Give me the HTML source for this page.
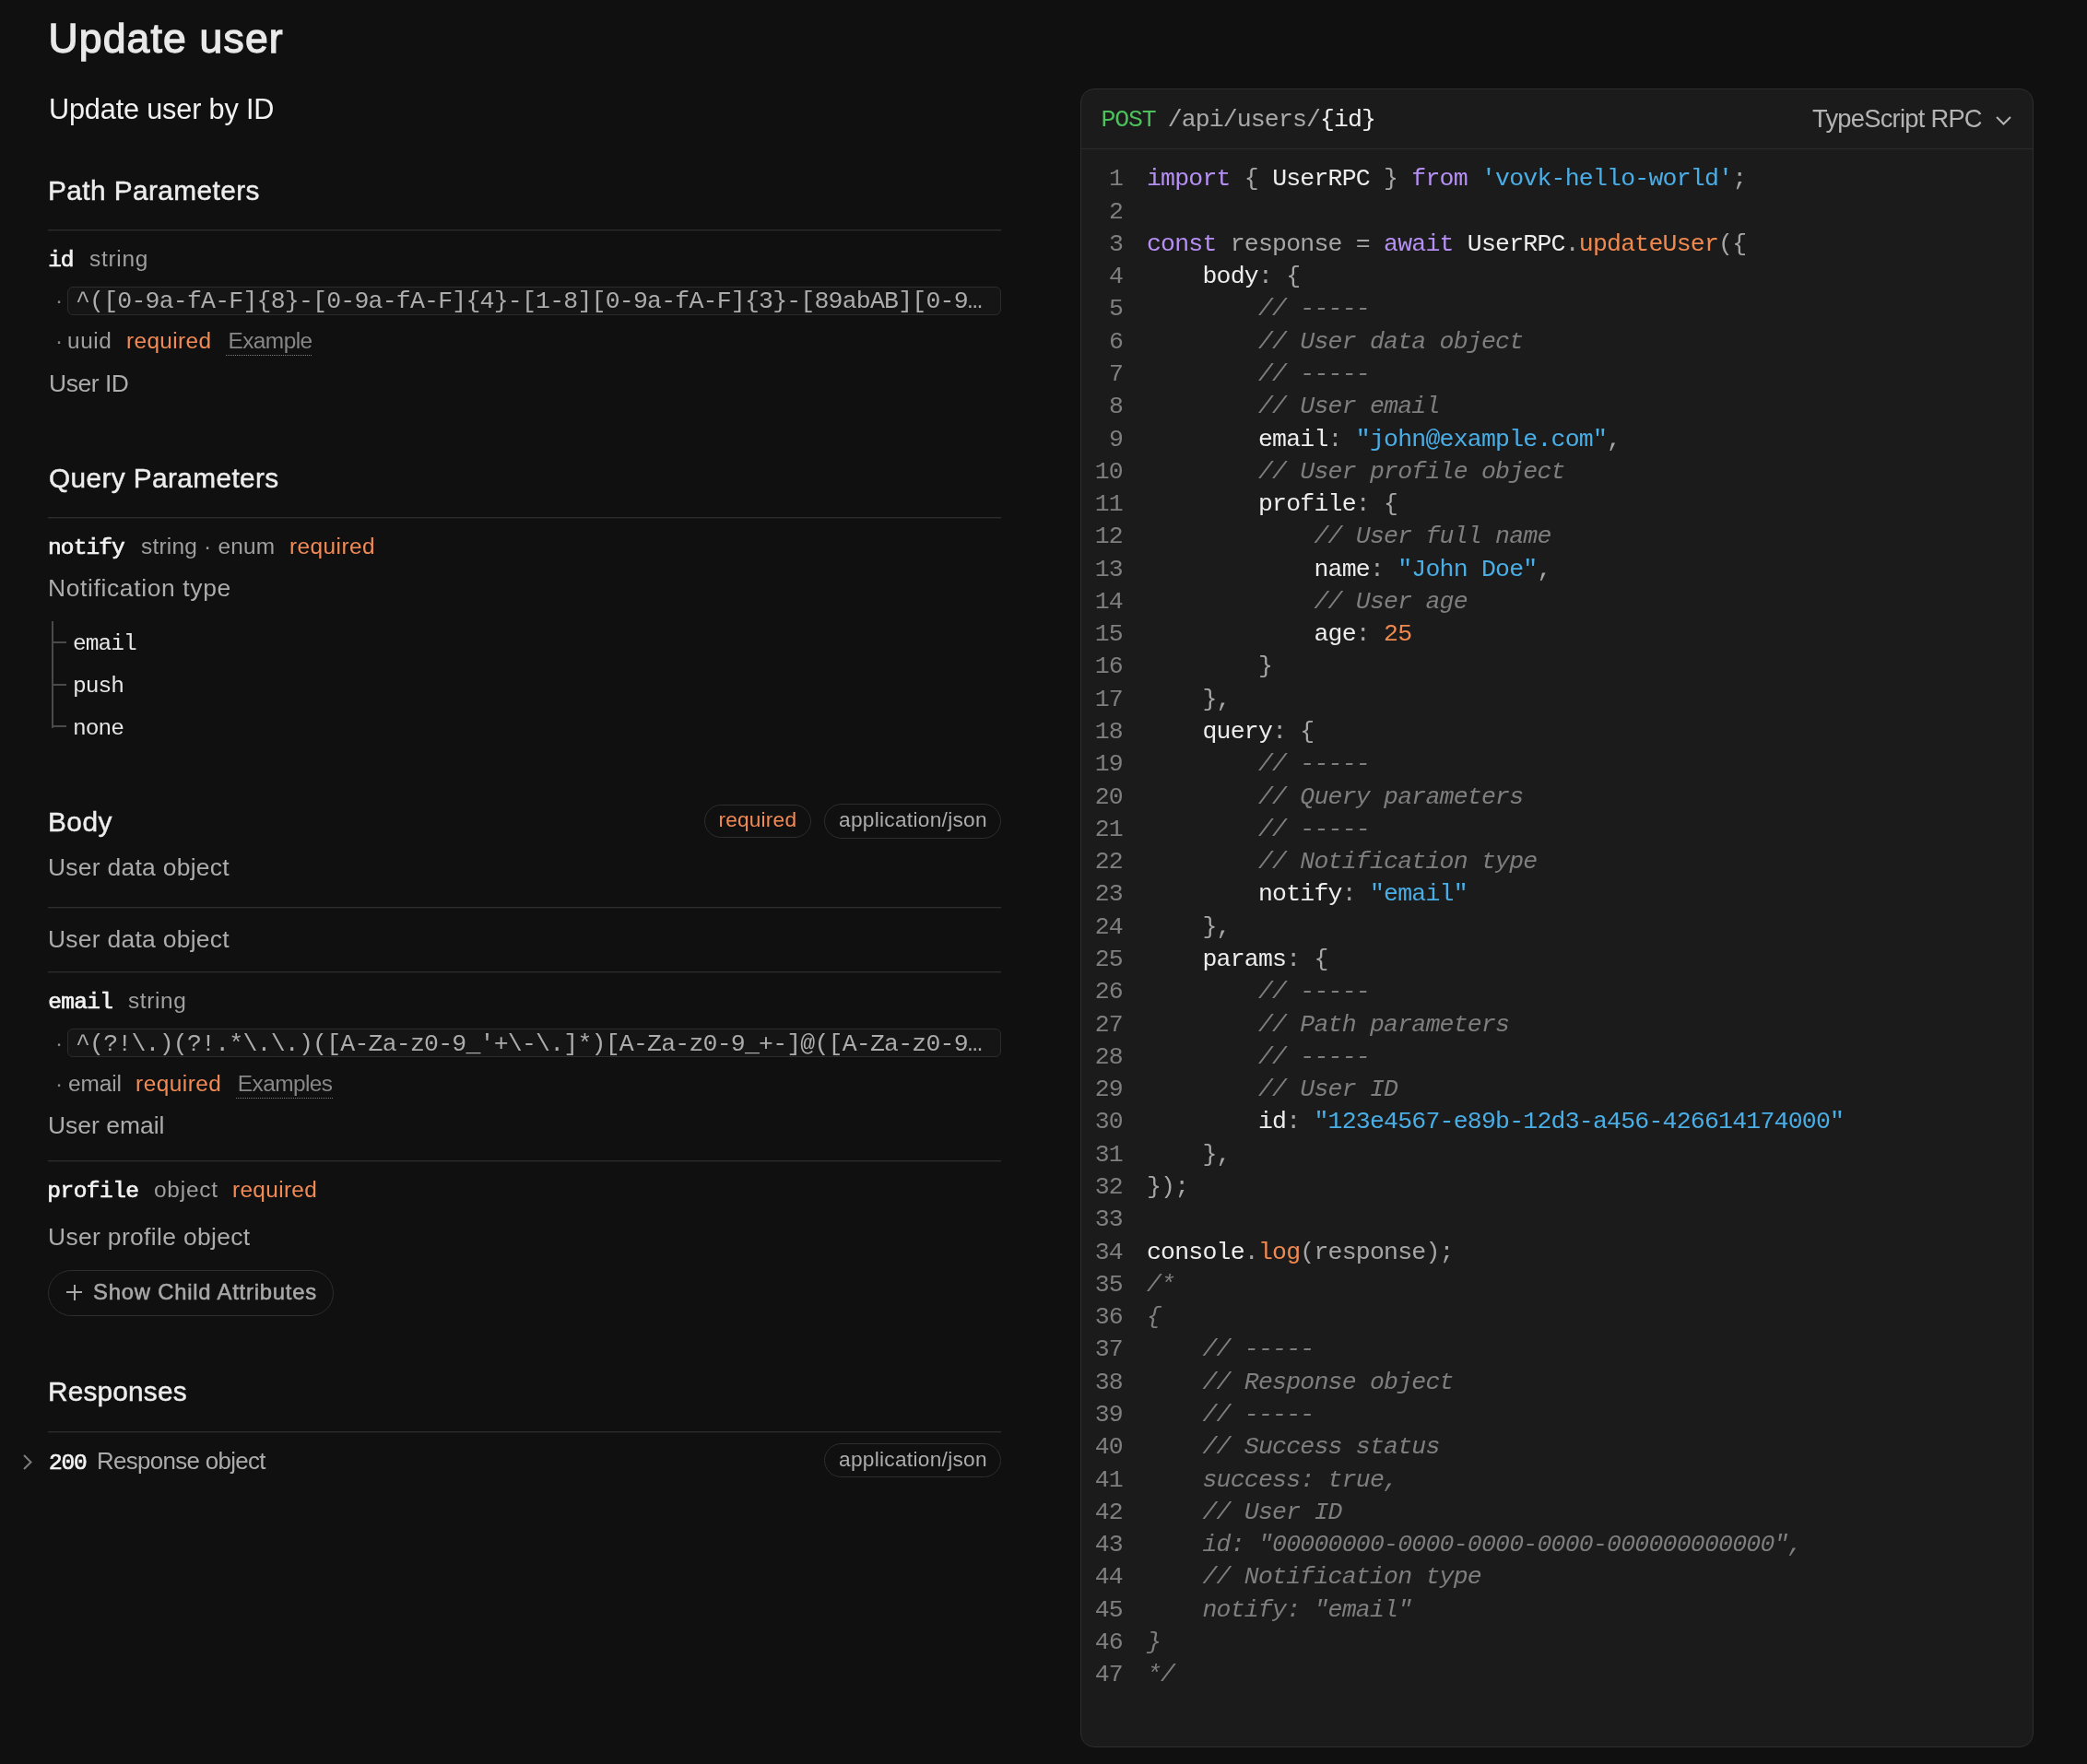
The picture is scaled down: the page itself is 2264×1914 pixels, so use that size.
<!DOCTYPE html>
<html><head><meta charset="utf-8"><title>Update user</title>
<style>
html,body{margin:0;padding:0;}
body{width:2264px;height:1914px;overflow:hidden;position:relative;background:#101010;font-family:'Liberation Sans', sans-serif;}
.bgfade{position:absolute;left:0;top:0;width:2264px;height:1914px;background:linear-gradient(90deg,rgba(0,0,0,0) 0px,rgba(0,0,0,0) 1750px,rgba(0,0,0,0.22) 2264px);}
.t{position:absolute;white-space:pre;font-family:'Liberation Sans', sans-serif;}
.b{position:absolute;}
.wrap{position:absolute;left:0;top:0;width:2264px;height:1914px;will-change:transform;}
.code{position:absolute;margin:0;font-family:'Liberation Mono', monospace;font-size:26.5px;line-height:35.28px;color:#ededed;white-space:pre;letter-spacing:-0.78px;}
</style></head><body>
<div class="wrap">
<div class="t" id="title" style="left:52.40px;top:20.46px;font-size:44.48px;line-height:44.48px;color:#e9e9e9;letter-spacing:1.200px;-webkit-text-stroke:1.3px #e9e9e9;">Update user</div>
<div class="t" id="subtitle" style="left:53.00px;top:102.57px;font-size:30.67px;line-height:30.67px;color:#f2f2f2;letter-spacing:-0.163px;">Update user by ID</div>
<div class="t" id="h_path" style="left:52.00px;top:192.00px;font-size:29.80px;line-height:29.80px;color:#ededed;letter-spacing:0.421px;-webkit-text-stroke:0.45px #ededed;">Path Parameters</div>
<div class="b" style="left:52.00px;top:249.00px;width:1034.00px;height:2.00px;background:linear-gradient(#2c2c2c 50%,#1a1a1a 50%);"></div>
<div class="t" id="id_name" style="left:52.20px;top:271.45px;font-size:24.50px;line-height:24.50px;color:#f2f2f2;font-family:'Liberation Mono', monospace;letter-spacing:-1.200px;-webkit-text-stroke:0.7px #f2f2f2;">id</div>
<div class="t" id="id_type" style="left:97.00px;top:269.49px;font-size:24.42px;line-height:24.42px;color:#9f9f9f;letter-spacing:0.740px;">string</div>
<div class="b" style="left:73.00px;top:311.00px;width:1013.00px;height:31.00px;border:1px solid #2c2c2c;border-radius:6px;background:#151515;box-sizing:border-box;"></div>
<div class="t" id="dot1" style="left:60.00px;top:313.59px;font-size:24.42px;line-height:24.42px;color:#878787;">·</div>
<div class="t" id="regex1" style="left:82.00px;top:314.05px;font-size:26.50px;line-height:26.50px;color:#acacac;font-family:'Liberation Mono', monospace;letter-spacing:-0.780px;">^([0-9a-fA-F]{8}-[0-9a-fA-F]{4}-[1-8][0-9a-fA-F]{3}-[89abAB][0-9…</div>
<div class="t" id="dot2" style="left:60.00px;top:358.39px;font-size:24.42px;line-height:24.42px;color:#878787;">·</div>
<div class="t" id="id_fmt" style="left:73.00px;top:358.39px;font-size:24.42px;line-height:24.42px;color:#9f9f9f;letter-spacing:0.567px;">uuid</div>
<div class="t" id="id_req" style="left:137.00px;top:358.39px;font-size:24.42px;line-height:24.42px;color:#f28a55;letter-spacing:0.357px;">required</div>
<div class="t" id="id_ex" style="left:247.40px;top:358.39px;font-size:24.42px;line-height:24.42px;color:#878787;letter-spacing:-0.530px;">Example</div>
<div class="b" style="left:245.00px;top:385.00px;width:94.00px;height:1.00px;background-image:linear-gradient(90deg,#7a7a7a 50%,transparent 50%);background-size:2px 1px;"></div>
<div class="t" id="id_desc" style="left:53.00px;top:402.57px;font-size:26.45px;line-height:26.45px;color:#acacac;letter-spacing:-0.450px;">User ID</div>
<div class="t" id="h_query" style="left:53.00px;top:503.70px;font-size:29.80px;line-height:29.80px;color:#ededed;letter-spacing:0.387px;-webkit-text-stroke:0.45px #ededed;">Query Parameters</div>
<div class="b" style="left:52.00px;top:561.00px;width:1034.00px;height:2.00px;background:linear-gradient(#2c2c2c 50%,#1a1a1a 50%);"></div>
<div class="t" id="notify_name" style="left:52.00px;top:582.85px;font-size:24.50px;line-height:24.50px;color:#f2f2f2;font-family:'Liberation Mono', monospace;letter-spacing:-0.880px;-webkit-text-stroke:0.7px #f2f2f2;">notify</div>
<div class="t" id="notify_type" style="left:153.00px;top:580.89px;font-size:24.42px;line-height:24.42px;color:#9f9f9f;letter-spacing:0.225px;">string · enum</div>
<div class="t" id="notify_req" style="left:314.00px;top:580.89px;font-size:24.42px;line-height:24.42px;color:#f28a55;letter-spacing:0.429px;">required</div>
<div class="t" id="notify_desc" style="left:52.00px;top:624.97px;font-size:26.45px;line-height:26.45px;color:#acacac;letter-spacing:0.631px;">Notification type</div>
<div class="b" style="left:56.00px;top:673.50px;width:2.00px;height:116.90px;background:#4a4a4a;"></div>
<div class="b" style="left:56.00px;top:695.80px;width:16.00px;height:2.00px;background:#4a4a4a;"></div>
<div class="b" style="left:56.00px;top:742.00px;width:16.00px;height:2.00px;background:#4a4a4a;"></div>
<div class="b" style="left:56.00px;top:787.40px;width:16.00px;height:2.00px;background:#4a4a4a;"></div>
<div class="t" id="enum_email" style="left:79.00px;top:686.75px;font-size:24.50px;line-height:24.50px;color:#e6e6e6;font-family:'Liberation Mono', monospace;letter-spacing:-0.925px;">email</div>
<div class="t" id="enum_push" style="left:79.00px;top:732.75px;font-size:24.50px;line-height:24.50px;color:#e6e6e6;font-family:'Liberation Mono', monospace;letter-spacing:-0.925px;">push</div>
<div class="t" id="enum_none" style="left:79.00px;top:778.75px;font-size:24.50px;line-height:24.50px;color:#e6e6e6;font-family:'Liberation Mono', monospace;letter-spacing:-0.925px;">none</div>
<div class="t" id="h_body" style="left:52.00px;top:876.70px;font-size:29.80px;line-height:29.80px;color:#ededed;letter-spacing:0.467px;-webkit-text-stroke:0.45px #ededed;">Body</div>
<div class="b" style="left:764.30px;top:873.10px;width:115.70px;height:35.50px;border:1px solid #2e2e2e;border-radius:20px;box-sizing:border-box;"></div>
<div class="t" id="pill_req" style="left:779.40px;top:878.36px;font-size:22.67px;line-height:22.67px;color:#f28a55;letter-spacing:0.214px;">required</div>
<div class="b" style="left:893.90px;top:872.10px;width:192.10px;height:37.70px;border:1px solid #2e2e2e;border-radius:20px;box-sizing:border-box;"></div>
<div class="t" id="pill_json" style="left:910.00px;top:878.36px;font-size:22.67px;line-height:22.67px;color:#acacac;letter-spacing:0.293px;">application/json</div>
<div class="t" id="body_desc" style="left:52.00px;top:927.77px;font-size:26.45px;line-height:26.45px;color:#acacac;letter-spacing:0.273px;">User data object</div>
<div class="b" style="left:52.00px;top:984.00px;width:1034.00px;height:2.00px;background:linear-gradient(#2c2c2c 50%,#1a1a1a 50%);"></div>
<div class="t" id="body_desc2" style="left:52.00px;top:1005.97px;font-size:26.45px;line-height:26.45px;color:#acacac;letter-spacing:0.273px;">User data object</div>
<div class="b" style="left:52.00px;top:1054.00px;width:1034.00px;height:2.00px;background:linear-gradient(#2c2c2c 50%,#1a1a1a 50%);"></div>
<div class="t" id="email_name" style="left:52.20px;top:1076.25px;font-size:24.50px;line-height:24.50px;color:#f2f2f2;font-family:'Liberation Mono', monospace;letter-spacing:-0.700px;-webkit-text-stroke:0.7px #f2f2f2;">email</div>
<div class="t" id="email_type" style="left:139.00px;top:1074.29px;font-size:24.42px;line-height:24.42px;color:#9f9f9f;letter-spacing:0.620px;">string</div>
<div class="b" style="left:73.00px;top:1116.00px;width:1013.00px;height:31.00px;border:1px solid #2c2c2c;border-radius:6px;background:#151515;box-sizing:border-box;"></div>
<div class="t" id="dot3" style="left:60.00px;top:1119.79px;font-size:24.42px;line-height:24.42px;color:#878787;">·</div>
<div class="t" id="regex2" style="left:82.00px;top:1120.25px;font-size:26.50px;line-height:26.50px;color:#acacac;font-family:'Liberation Mono', monospace;letter-spacing:-0.780px;">^(?!\.)(?!.*\.\.)([A-Za-z0-9_&#x27;+\-\.]*)[A-Za-z0-9_+-]@([A-Za-z0-9…</div>
<div class="t" id="dot4" style="left:60.00px;top:1164.09px;font-size:24.42px;line-height:24.42px;color:#878787;">·</div>
<div class="t" id="email_fmt" style="left:74.00px;top:1164.09px;font-size:24.42px;line-height:24.42px;color:#9f9f9f;letter-spacing:-0.075px;">email</div>
<div class="t" id="email_req" style="left:147.10px;top:1164.09px;font-size:24.42px;line-height:24.42px;color:#f28a55;letter-spacing:0.471px;">required</div>
<div class="t" id="email_ex" style="left:257.80px;top:1164.09px;font-size:24.42px;line-height:24.42px;color:#878787;letter-spacing:-0.557px;">Examples</div>
<div class="b" style="left:256.00px;top:1191.00px;width:105.00px;height:1.00px;background-image:linear-gradient(90deg,#7a7a7a 50%,transparent 50%);background-size:2px 1px;"></div>
<div class="t" id="email_desc" style="left:51.90px;top:1207.87px;font-size:26.45px;line-height:26.45px;color:#acacac;letter-spacing:0.022px;">User email</div>
<div class="b" style="left:52.00px;top:1259.00px;width:1034.00px;height:2.00px;background:linear-gradient(#2c2c2c 50%,#1a1a1a 50%);"></div>
<div class="t" id="profile_name" style="left:51.30px;top:1280.75px;font-size:24.50px;line-height:24.50px;color:#f2f2f2;font-family:'Liberation Mono', monospace;letter-spacing:-0.533px;-webkit-text-stroke:0.7px #f2f2f2;">profile</div>
<div class="t" id="profile_type" style="left:167.00px;top:1278.79px;font-size:24.42px;line-height:24.42px;color:#9f9f9f;letter-spacing:0.780px;">object</div>
<div class="t" id="profile_req" style="left:252.00px;top:1278.79px;font-size:24.42px;line-height:24.42px;color:#f28a55;letter-spacing:0.329px;">required</div>
<div class="t" id="profile_desc" style="left:52.00px;top:1328.77px;font-size:26.45px;line-height:26.45px;color:#acacac;letter-spacing:0.339px;">User profile object</div>
<div class="b" style="left:52.00px;top:1378.20px;width:310.30px;height:49.50px;border:1px solid #2e2e2e;border-radius:30px;box-sizing:border-box;"></div>
<div class="b" style="left:71.80px;top:1401.30px;width:17.40px;height:2.00px;background:#a8a8a8;"></div>
<div class="b" style="left:79.50px;top:1393.60px;width:2.00px;height:17.40px;background:#a8a8a8;"></div>
<div class="t" id="btn_txt" style="left:101.00px;top:1389.98px;font-size:23.84px;line-height:23.84px;color:#a8a8a8;letter-spacing:0.785px;-webkit-text-stroke:0.55px #a8a8a8;">Show Child Attributes</div>
<div class="t" id="h_resp" style="left:52.00px;top:1494.80px;font-size:29.80px;line-height:29.80px;color:#ededed;letter-spacing:0.188px;-webkit-text-stroke:0.45px #ededed;">Responses</div>
<div class="b" style="left:52.00px;top:1553.00px;width:1034.00px;height:2.00px;background:linear-gradient(#2c2c2c 50%,#1a1a1a 50%);"></div>
<svg class="b" style="left:22px;top:1576px" width="16" height="22" viewBox="0 0 16 22"><path d="M4 3 L11.5 10.5 L4 18" fill="none" stroke="#7d7d7d" stroke-width="2"/></svg>
<div class="t" id="r200" style="left:53.10px;top:1575.85px;font-size:24.50px;line-height:24.50px;color:#f2f2f2;font-family:'Liberation Mono', monospace;letter-spacing:-1.200px;-webkit-text-stroke:0.7px #f2f2f2;">200</div>
<div class="t" id="r200_desc" style="left:105.00px;top:1572.66px;font-size:25.87px;line-height:25.87px;color:#acacac;letter-spacing:-0.650px;">Response object</div>
<div class="b" style="left:894.00px;top:1565.80px;width:192.00px;height:36.90px;border:1px solid #2e2e2e;border-radius:20px;box-sizing:border-box;"></div>
<div class="t" id="pill_json2" style="left:910.00px;top:1572.16px;font-size:22.67px;line-height:22.67px;color:#acacac;letter-spacing:0.293px;">application/json</div>
<div class="b" style="left:1172.00px;top:96.00px;width:1034.00px;height:1800.00px;border:1px solid #2e2e2e;border-radius:15px;background:#1b1b1b;box-sizing:border-box;"></div>
<div class="b" style="left:1173.00px;top:161.00px;width:1032.00px;height:1.00px;background:#2b2b2b;"></div>
<div class="t" id="post" style="left:1194.60px;top:116.85px;font-size:26.50px;line-height:26.50px;color:#4cc15c;font-family:'Liberation Mono', monospace;letter-spacing:-1.167px;">POST</div>
<div class="t" id="path" style="left:1266.70px;top:116.85px;font-size:26.50px;line-height:26.50px;color:#eee;font-family:'Liberation Mono', monospace;letter-spacing:-0.879px;"><span style="color:#a9a9a9">/api/users/</span><span style="color:#f2f2f2">{id}</span></div>
<div class="t" id="lang" style="left:1966.00px;top:115.04px;font-size:27.33px;line-height:27.33px;color:#b4b4b4;letter-spacing:-0.754px;">TypeScript RPC</div>
<svg class="b" style="left:2163px;top:122px" width="20" height="16" viewBox="0 0 20 16"><path d="M3 5 L10.5 12.5 L18 5" fill="none" stroke="#b4b4b4" stroke-width="2"/></svg>
<pre class="code" style="left:1121.50px;top:177.26px;width:96.50px;text-align:right;color:#7f7f7f">1
2
3
4
5
6
7
8
9
10
11
12
13
14
15
16
17
18
19
20
21
22
23
24
25
26
27
28
29
30
31
32
33
34
35
36
37
38
39
40
41
42
43
44
45
46
47</pre>
<pre class="code" style="left:1244.00px;top:177.26px;"><span style="color:#b58ff3">import</span><span style="color:#a6a6a6"> { </span><span style="color:#ededed">UserRPC</span><span style="color:#a6a6a6"> } </span><span style="color:#b58ff3">from</span><span style="color:#a6a6a6"> </span><span style="color:#4aaee6">&#x27;vovk-hello-world&#x27;</span><span style="color:#a6a6a6">;</span>

<span style="color:#b58ff3">const</span><span style="color:#a6a6a6"> response = </span><span style="color:#b58ff3">await</span> <span style="color:#ededed">UserRPC</span><span style="color:#a6a6a6">.</span><span style="color:#f0894f">updateUser</span><span style="color:#a6a6a6">({</span>
    <span style="color:#ededed">body</span><span style="color:#a6a6a6">: {</span>
        <span style="color:#7e7e7e;font-style:italic">// -----</span>
        <span style="color:#7e7e7e;font-style:italic">// User data object</span>
        <span style="color:#7e7e7e;font-style:italic">// -----</span>
        <span style="color:#7e7e7e;font-style:italic">// User email</span>
        <span style="color:#ededed">email</span><span style="color:#a6a6a6">: </span><span style="color:#4aaee6">&quot;john@example.com&quot;</span><span style="color:#a6a6a6">,</span>
        <span style="color:#7e7e7e;font-style:italic">// User profile object</span>
        <span style="color:#ededed">profile</span><span style="color:#a6a6a6">: {</span>
            <span style="color:#7e7e7e;font-style:italic">// User full name</span>
            <span style="color:#ededed">name</span><span style="color:#a6a6a6">: </span><span style="color:#4aaee6">&quot;John Doe&quot;</span><span style="color:#a6a6a6">,</span>
            <span style="color:#7e7e7e;font-style:italic">// User age</span>
            <span style="color:#ededed">age</span><span style="color:#a6a6a6">: </span><span style="color:#f0894f">25</span>
        <span style="color:#a6a6a6">}</span>
    <span style="color:#a6a6a6">},</span>
    <span style="color:#ededed">query</span><span style="color:#a6a6a6">: {</span>
        <span style="color:#7e7e7e;font-style:italic">// -----</span>
        <span style="color:#7e7e7e;font-style:italic">// Query parameters</span>
        <span style="color:#7e7e7e;font-style:italic">// -----</span>
        <span style="color:#7e7e7e;font-style:italic">// Notification type</span>
        <span style="color:#ededed">notify</span><span style="color:#a6a6a6">: </span><span style="color:#4aaee6">&quot;email&quot;</span>
    <span style="color:#a6a6a6">},</span>
    <span style="color:#ededed">params</span><span style="color:#a6a6a6">: {</span>
        <span style="color:#7e7e7e;font-style:italic">// -----</span>
        <span style="color:#7e7e7e;font-style:italic">// Path parameters</span>
        <span style="color:#7e7e7e;font-style:italic">// -----</span>
        <span style="color:#7e7e7e;font-style:italic">// User ID</span>
        <span style="color:#ededed">id</span><span style="color:#a6a6a6">: </span><span style="color:#4aaee6">&quot;123e4567-e89b-12d3-a456-426614174000&quot;</span>
    <span style="color:#a6a6a6">},</span>
<span style="color:#a6a6a6">});</span>

<span style="color:#ededed">console</span><span style="color:#a6a6a6">.</span><span style="color:#f0894f">log</span><span style="color:#a6a6a6">(response);</span>
<span style="color:#7e7e7e;font-style:italic">/*</span>
<span style="color:#7e7e7e;font-style:italic">{</span>
    <span style="color:#7e7e7e;font-style:italic">// -----</span>
    <span style="color:#7e7e7e;font-style:italic">// Response object</span>
    <span style="color:#7e7e7e;font-style:italic">// -----</span>
    <span style="color:#7e7e7e;font-style:italic">// Success status</span>
    <span style="color:#7e7e7e;font-style:italic">success: true,</span>
    <span style="color:#7e7e7e;font-style:italic">// User ID</span>
    <span style="color:#7e7e7e;font-style:italic">id: &quot;00000000-0000-0000-0000-000000000000&quot;,</span>
    <span style="color:#7e7e7e;font-style:italic">// Notification type</span>
    <span style="color:#7e7e7e;font-style:italic">notify: &quot;email&quot;</span>
<span style="color:#7e7e7e;font-style:italic">}</span>
<span style="color:#7e7e7e;font-style:italic">*/</span></pre>
</div>
</body></html>
